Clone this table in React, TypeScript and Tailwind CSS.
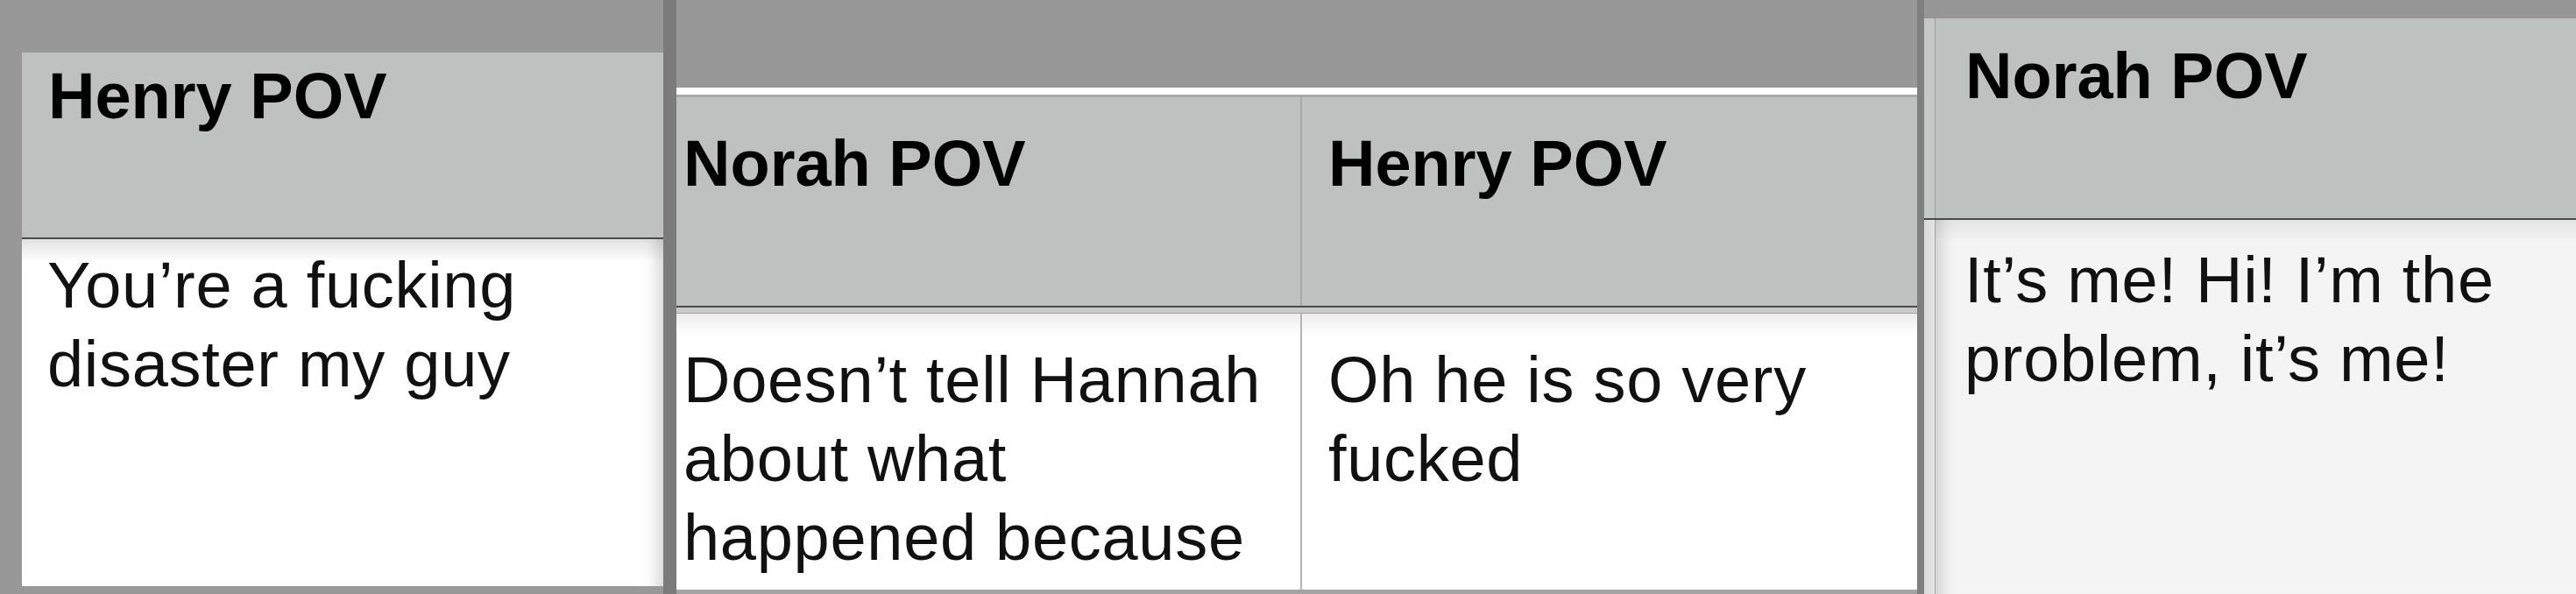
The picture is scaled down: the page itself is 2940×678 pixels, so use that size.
const font = "font-['Liberation_Sans','Helvetica','Arial',sans-serif]";
const headText = "text-[74px] leading-[90px] font-bold text-black";
const bodyText = "text-[74px] leading-[90px] tracking-[0.7px] text-[#111]";

function HeaderLine() {
  return <div className="h-[2px] bg-[#4a4a4a]" />;
}

function LeftCard() {
  return (
    <div className="flex h-full w-[757px] shrink-0 flex-col bg-[#989898] pl-[25px] pt-[60px] pb-[9px]">
      <div className="flex h-full w-[732px] flex-col overflow-hidden">
        <div className="h-[211px] bg-[#bfc1c0] pl-[30px] pt-[5px]">
          <p className={headText}>Henry POV</p>
        </div>
        <HeaderLine />
        <div className="flex-1 bg-[linear-gradient(to_bottom,#e2e2e2,#ffffff_26px)] pl-[29px] pt-[8px] shadow-[inset_-22px_0_18px_-16px_rgba(0,0,0,0.18)]">
          <p className={bodyText}>
            You’re a fucking
            <br />
            disaster my guy
          </p>
        </div>
      </div>
    </div>
  );
}

function MiddleTable() {
  return (
    <div className="flex h-full w-[1431px] shrink-0">
      <div className="h-full w-[15px] bg-[#7b7b7b]" />
      <div className="flex h-full w-[1416px] flex-col">
        <div className="h-[100px] bg-[#989898]" />
        <div className="h-[8px] bg-white" />
        <div className="h-[3px] bg-[#a8a8a8]" />
        <div className="grid h-[238px] grid-cols-[712px_2px_1fr] bg-[#bfc1c0]">
          <div className="pl-[8px] pt-[31px]">
            <p className={headText}>Norah POV</p>
          </div>
          <div className="bg-[#a6a8a7]" />
          <div className="pl-[30px] pt-[31px]">
            <p className={headText}>Henry POV</p>
          </div>
        </div>
        <HeaderLine />
        <div className="h-[6px] bg-[#cacaca]" />
        <div className="h-[1px] bg-[#a2a2a2]" />
        <div className="grid h-[315px] grid-cols-[712px_2px_1fr] overflow-hidden bg-[linear-gradient(to_bottom,#ececec,#ffffff_24px)]">
          <div className="pl-[8px] pt-[31px]">
            <p className={bodyText}>
              Doesn’t tell Hannah
              <br />
              about what
              <br />
              happened because
            </p>
          </div>
          <div className="bg-[#b4b4b4]" />
          <div className="pl-[30px] pt-[31px]">
            <p className={bodyText}>
              Oh he is so very
              <br />
              fucked
            </p>
          </div>
        </div>
        <div className="flex-1 bg-[#a3a3a3]" />
      </div>
    </div>
  );
}

function RightCard() {
  return (
    <div className="flex h-full flex-1">
      <div className="h-full w-[8px] bg-[#7f7f7f]" />
      <div className="flex h-full flex-1 flex-col">
        <div className="h-[21px] bg-[#969696]" />
        <div className="flex h-[228px] bg-[#bfc1c0]">
          <div className="w-[12px] bg-[#c6c8c7]" />
          <div className="w-[1px] bg-[#9c9c9c]" />
          <div className="flex-1 pl-[34px] pt-[21px]">
            <p className={headText}>Norah POV</p>
          </div>
        </div>
        <HeaderLine />
        <div className="flex flex-1">
          <div className="w-[12px] bg-[linear-gradient(to_right,#d8d8d8,#e6e6e6)]" />
          <div className="w-[1px] bg-[#a4a4a4]" />
          <div className="flex-1 bg-[linear-gradient(to_bottom,#e4e4e4,#f4f4f4_24px)] pl-[33px] pt-[24px] shadow-[inset_22px_0_18px_-16px_rgba(0,0,0,0.16)]">
            <p className={bodyText}>
              It’s me! Hi! I’m the
              <br />
              problem, it’s me!
            </p>
          </div>
        </div>
      </div>
    </div>
  );
}

export default function App() {
  return (
    <div className={`flex h-[678px] w-[2940px] overflow-hidden bg-[#989898] ${font}`}>
      <LeftCard />
      <MiddleTable />
      <RightCard />
    </div>
  );
}
